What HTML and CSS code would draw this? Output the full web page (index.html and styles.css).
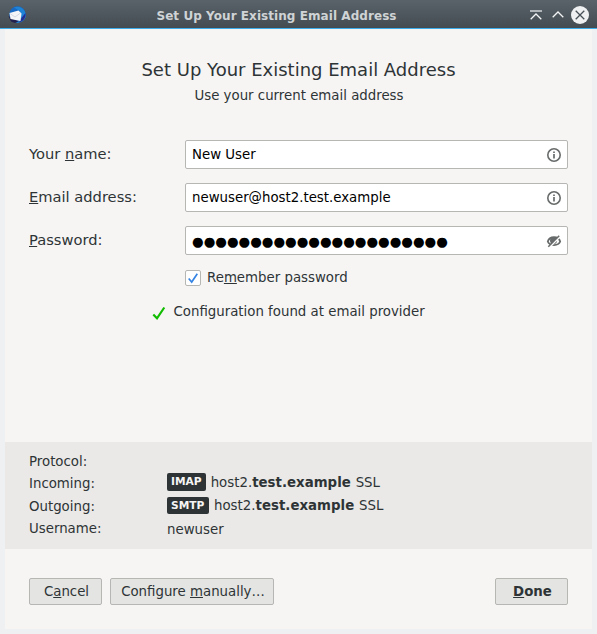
FILE: index.html
```html
<!DOCTYPE html>
<html lang="en">
<head>
<meta charset="utf-8">
<title>Set Up Your Existing Email Address</title>
<link rel="stylesheet" href="styles.css">
</head>
<body>
<header class="titlebar">
  <svg class="app-icon" viewBox="0 0 20 20">
    <circle cx="10.500" cy="9.500" r="8.300" fill="#1769c4"/>
    <path d="M7 2.500C13-.5 20 5 18.500 12 17.500 16 13 18.500 9 17.500L14 14 13 6Z" fill="#1f83d6"/>
    <path d="M12 17.500C17 16 19 12 18.500 8L14.500 13Z" fill="#252d91"/>
    <path d="M1.500 11 4 16.500 8 18 12 16 6 14Z" fill="#22204f"/>
    <path d="M2.500 8 11.500 5.500 14.500 8.500 13.500 16 3.500 14Z" fill="#f4f5f8"/>
    <path d="M3 8.500 8 12 13.500 8" fill="none" stroke="#cbd2de" stroke-width=".8"/>
  </svg>
  <div class="window-title">Set Up Your Existing Email Address</div>
  <svg class="controls" viewBox="0 0 64 20">
    <path d="M2 6H14" fill="none" stroke="#b1b6ba" stroke-width="2"/>
    <path d="M2.700 14.300 8 9l5.300 5.300M24.700 12.300 30 7l5.300 5.300" fill="none" stroke="#f3f4f5" stroke-width="1.300"/>
    <circle cx="52" cy="10" r="9" fill="#eff0f1"/>
    <path d="M47.700 5.700l8.600 8.600M56.300 5.700l-8.600 8.600" stroke="#475057" stroke-width="1.300"/>
  </svg>
</header>
<main class="dialog">
  <h1>Set Up Your Existing Email Address</h1>
  <p class="subtitle">Use your current email address</p>
  <form class="form">
    <div class="row">
      <label>Your <u>n</u>ame:</label>
      <div class="field"><span class="value">New User</span>
        <svg class="info" viewBox="0 0 16 16"><circle cx="8" cy="8" r="6.200" fill="none" stroke="#686b6b" stroke-width="1.600"/><path d="M8 7v4.500M8 4.500v1.600" stroke="#686b6b" stroke-width="1.700"/></svg>
      </div>
    </div>
    <div class="row">
      <label><u>E</u>mail address:</label>
      <div class="field"><span class="value">newuser@host2.test.example</span>
        <svg class="info" viewBox="0 0 16 16"><circle cx="8" cy="8" r="6.200" fill="none" stroke="#686b6b" stroke-width="1.600"/><path d="M8 7v4.500M8 4.500v1.600" stroke="#686b6b" stroke-width="1.700"/></svg>
      </div>
    </div>
    <div class="row">
      <label><u>P</u>assword:</label>
      <div class="field"><span class="value dots">●●●●●●●●●●●●●●●●●●●●●●</span>
        <svg class="info" viewBox="0 0 16 16"><path d="M1.800 8.500C3.500 2.800 12.500 2.800 14.200 8.500 12.500 13.200 3.500 13.200 1.800 8.500Z" fill="none" stroke="#686b6b" stroke-width="1.800"/><circle cx="7.500" cy="7.500" r="3.500" fill="#686b6b"/><path d="M3.300 14.300 14 3.600" stroke="#fff" stroke-width="1.700"/><path d="M2.300 13.700 13.200 2.800" stroke="#686b6b" stroke-width="1.500"/></svg>
      </div>
    </div>
    <div class="remember">
      <span class="checkbox"><svg viewBox="0 0 14 14"><path d="M2.700 7.500 5.700 11 11.300 2.800" fill="none" stroke="#3584e4" stroke-width="1.700"/></svg></span>
      <span>Re<u>m</u>ember password</span>
    </div>
    <div class="status">
      <svg viewBox="0 0 14 14"><path d="M1.300 8.500 5 12.300 12.300 1.500" fill="none" stroke="#12bc00" stroke-width="2.200"/></svg>
      <span>Configuration found at email provider</span>
    </div>
  </form>
  <section class="result">
    <div class="keys"><div>Protocol:</div><div>Incoming:</div><div>Outgoing:</div><div>Username:</div></div>
    <div class="details">
      <div class="server"><span class="badge imap">IMAP</span><span>host2.<b>test.example</b> SSL</span></div>
      <div class="server"><span class="badge smtp">SMTP</span><span>host2.<b>test.example</b> SSL</span></div>
      <div class="user">newuser</div>
    </div>
  </section>
  <footer class="buttons">
    <button class="cancel">C<u>a</u>ncel</button>
    <button class="manual">Configure <u>m</u>anually…</button>
    <button class="done"><u>D</u>one</button>
  </footer>
</main>
</body>
</html>
```
FILE: styles.css
```css
* { box-sizing: border-box; }
body {
  margin: 0;
  height: 634px;
  background: #eff0f2;
  color: #2e3436;
  font: 13.333px/20px "DejaVu Sans", sans-serif;
  overflow: hidden;
}
svg { display: block; flex: none; }
u { text-decoration-thickness: 1px; text-underline-offset: 1px; text-decoration-skip-ink: none; }
.titlebar {
  height: 29px;
  display: flex;
  align-items: center;
  background: linear-gradient(#596369, #444c52);
  border-bottom: 1px solid #3daee9;
  padding: 2px 5px 0 7px;
}
.app-icon { width: 20px; height: 20px; }
.window-title {
  flex: 1;
  padding-right: 2px;
  padding-top: 1px;
  text-align: center;
  font-size: 12px;
  letter-spacing: .06px;
  font-weight: bold;
  color: #cfd3d5;
}
.controls { width: 64px; height: 20px; }
.dialog {
  margin: 0 5px;
  height: 600px;
  background: #f6f5f4;
  display: flex;
  flex-direction: column;
}
h1 {
  margin: 29px 0 0;
  font-size: 18px;
  line-height: 24px;
  font-weight: normal;
  text-align: center;
}
.subtitle { margin: 4px 0 0; padding-left: 1px; text-align: center; }
.form { margin: 34px 24px 0; height: 302px; }
.row { display: grid; grid-template-columns: 156px 1fr; height: 29px; margin-bottom: 14px; }
.row label { font-size: 14.667px; line-height: 28px; }
.field {
  display: flex;
  align-items: center;
  justify-content: space-between;
  border: 1px solid #b6b6b3;
  border-radius: 2px;
  background: #fff;
  color: #000;
  padding: 0 5px 0 6px;
}
.value { line-height: 27px; }
.info { width: 16px; height: 16px; }
.dots { font-size: 13.333px; line-height: 25px; padding-top: 1px; white-space: nowrap; }
.remember { display: flex; gap: 6px; margin-left: 156px; height: 20px; margin-top: -1px; }
.checkbox { width: 16px; height: 16px; margin-top: 2px; border: 1px solid #b6b6b3; border-radius: 2px; background: #fff; }
.checkbox svg { width: 14px; height: 14px; }
.status { display: flex; gap: 7.500px; margin: 14px 0 0 123px; }
.status svg { width: 14px; height: 14px; margin-top: 4px; }
.result {
  height: 107px;
  background: #eae9e7;
  padding: 8px 24px;
  display: grid;
  grid-template-columns: 138px 1fr;
}
.keys { line-height: 22.500px; padding-top: .5px; }
.details { padding-top: 21px; }
.server { display: flex; align-items: center; gap: 5px; height: 23px; word-spacing: .6px; }
.badge {
  height: 18px;
  padding: 0 4px;
  border-radius: 2px;
  background: #2e3436;
  color: #f6f5f4;
  font-size: 10.667px;
  font-weight: bold;
  line-height: 18px;
}
.imap { margin-bottom: 1px; }
.smtp { width: 42px; height: 17px; line-height: 17px; }
.server b { letter-spacing: .02px; }
.user { line-height: 25px; }
.buttons { display: flex; gap: 8px; padding: 29px 24px 0; }
button {
  height: 27px;
  border: 1px solid #b6b6b3;
  border-radius: 2px;
  background: #e4e4e2;
  color: #2e3436;
  font: 13.333px/20px "DejaVu Sans", sans-serif;
  padding: 0;
}
.cancel { width: 73px; padding-left: 2px; }
.manual { width: 164px; padding-left: 2px; }
.done { width: 73px; margin-left: auto; font-weight: bold; padding-left: 2px; }
```
